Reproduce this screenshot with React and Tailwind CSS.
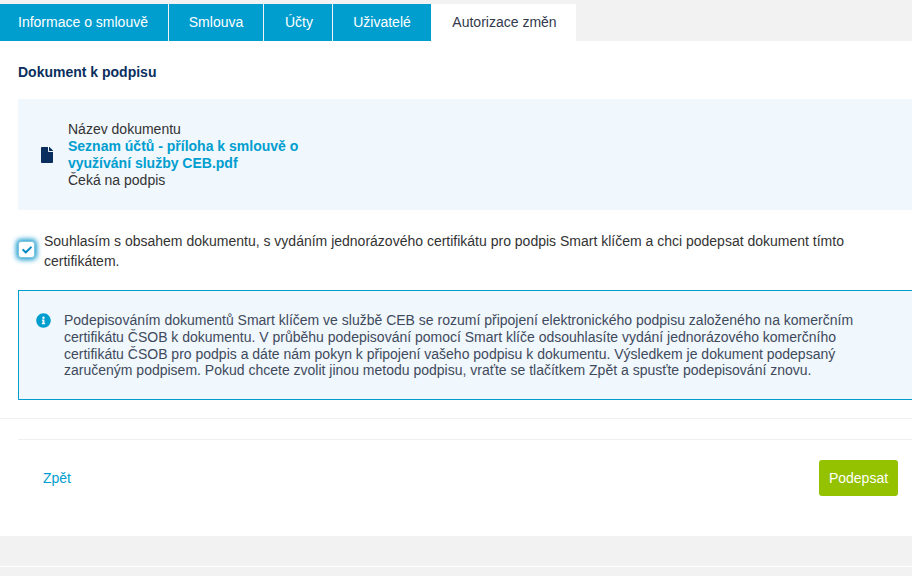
import { FaCheck, FaFile, FaInfoCircle } from 'react-icons/fa';

const tabs = [
    { label: 'Informace o smlouvě', width: 'w-[168px] pr-[2px]' },
    { label: 'Smlouva', width: 'w-[94px]' },
    { label: 'Účty', width: 'w-[68px] pl-[2px]' },
    { label: 'Uživatelé', width: 'w-[98px]' },
];

export default function App() {
    return (
        <div className="w-[912px] h-[576px] overflow-hidden bg-[#f2f2f2] text-[14px] text-[#333333] font-['Liberation_Sans',Arial,sans-serif]">
            {/* Tabs */}
            <div className="flex pt-1 h-[41px]">
                {tabs.map((tab) => (
                    <div key={tab.label} className={`${tab.width} mr-px flex items-center justify-center bg-[#009ecf] text-white`}>
                        {tab.label}
                    </div>
                ))}
                <div className="w-[145px] -ml-px pl-[2px] flex items-center justify-center bg-white text-[#333a4d]">
                    Autorizace změn
                </div>
            </div>

            <div className="h-[495px] bg-white">
                <div className="pl-[18px] pt-[24px]">
                    <h2 className="h-[34px] text-[14px] leading-[15px] font-bold text-[#0a2f5e]">Dokument k podpisu</h2>

                    {/* Document */}
                    <div className="h-[111px] flex items-center bg-[#f0f7fd]">
                        <FaFile className="ml-[23px] text-[#0a2f5e] w-[12px] h-[16px]" />
                        <div className="ml-[15px] w-[250px] text-[14px] leading-[17px]">
                            <div>Název dokumentu</div>
                            <div className="font-bold text-[#009ecf]">Seznam účtů - příloha k smlouvě o využívání služby CEB.pdf</div>
                            <div>Čeká na podpis</div>
                        </div>
                    </div>

                    {/* Consent */}
                    <div className="flex mt-[18px] pr-[24px]">
                        <div className="mt-[13px] w-[17px] h-[17px] shrink-0 flex items-center justify-center rounded-[3px] bg-white border border-[#7cc4e0] shadow-[0_0_5px_2px_#1f9fd0]">
                            <FaCheck className="w-[10px] h-[10px] text-[#0088c4]" />
                        </div>
                        <p className="ml-[9px] pt-[3px] leading-[20px]">
                            Souhlasím s obsahem dokumentu, s vydáním jednorázového certifikátu pro podpis Smart klíčem a chci podepsat dokument tímto certifikátem.
                        </p>
                    </div>

                    {/* Info */}
                    <div className="mt-[19px] h-[110px] flex border border-r-0 border-[#009ecf] bg-[#f0f7fd] pt-[21px] pl-[17px] pr-[40px]">
                        <FaInfoCircle className="mt-px w-[15px] h-[15px] shrink-0 text-[#009ecf]" />
                        <p className="ml-[13px] leading-[16.8px] text-[#3f4a5c]">
                            Podepisováním dokumentů Smart klíčem ve službě CEB se rozumí připojení elektronického podpisu založeného na komerčním certifikátu ČSOB k dokumentu. V průběhu podepisování pomocí Smart klíče odsouhlasíte vydání jednorázového komerčního certifikátu ČSOB pro podpis a dáte nám pokyn k připojení vašeho podpisu k dokumentu. Výsledkem je dokument podepsaný zaručeným podpisem. Pokud chcete zvolit jinou metodu podpisu, vraťte se tlačítkem Zpět a spusťte podepisování znovu.
                        </p>
                    </div>
                </div>

                <div className="mt-[18px] border-t border-[#f0f0f0]" />
                <div className="ml-[18px] mt-[20px] border-t border-[#f0f0f0]" />

                {/* Actions */}
                <div className="flex items-center justify-between mt-[20px] pl-[43px] pr-[14px]">
                    <a className="text-[#009ecf]">Zpět</a>
                    <button className="w-[79px] h-[36px] rounded-[3px] bg-[#94c100] text-white">Podepsat</button>
                </div>
            </div>

            <div className="mt-[30px] border-t border-white" />
        </div>
    );
}
